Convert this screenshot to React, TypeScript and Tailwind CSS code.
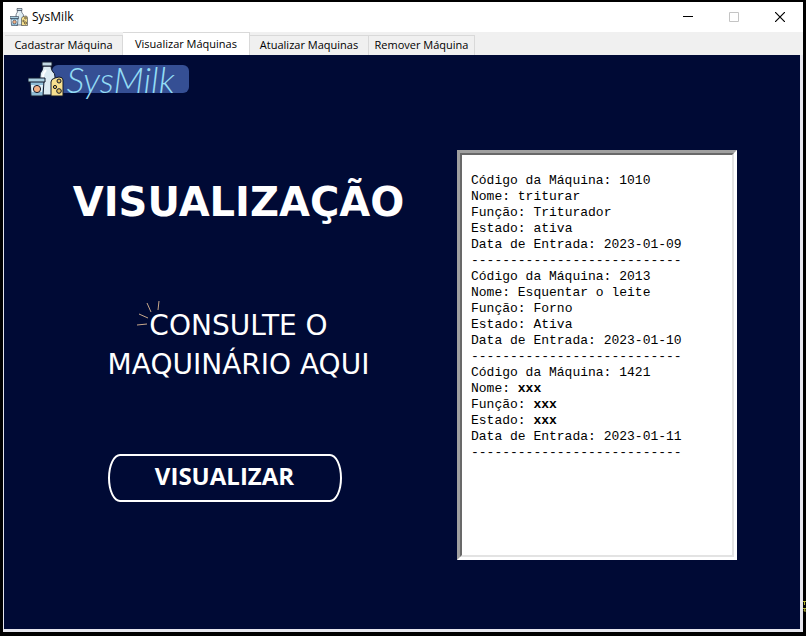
import { useState } from "react";

type Machine = {
  code: string;
  name: string;
  role: string;
  state: string;
  date: string;
  strong?: boolean;
};

const tabs = [
  { label: "Cadastrar Máquina", width: "w-[118px]" },
  { label: "Visualizar Máquinas", width: "w-[127px]" },
  { label: "Atualizar Maquinas", width: "w-[119px]" },
  { label: "Remover Máquina", width: "w-[106px]" },
];

const machines: Machine[] = [
  { code: "1010", name: "triturar", role: "Triturador", state: "ativa", date: "2023-01-09" },
  { code: "2013", name: "Esquentar o leite", role: "Forno", state: "Ativa", date: "2023-01-10" },
  { code: "1421", name: "xxx", role: "xxx", state: "xxx", date: "2023-01-11", strong: true },
];

function DairyIcon({ className }: { className: string }) {
  return (
    <svg viewBox="0 0 36 36" className={className} aria-hidden="true">
      <g stroke="#10182c" strokeWidth="1" strokeLinejoin="round">
        <path d="M15 5h8q0 4 2 6 2 1 2 5v18H12V16q0-4 1-5 2-2 2-6z" fill="#dcebf2" />
        <path d="M14 1h10v4H14z" fill="#c3d9e4" />
        <path d="M18 9q-3 3-3 7v14" stroke="#fff" strokeWidth="2" fill="none" />
        <path d="M2 20h14l-1 15H3z" fill="#8fbdd6" />
        <path d="M0 17h17v4H0z" fill="#a9cfe0" />
        <path d="M3 24h12l-1 7H4z" fill="#e4f2f8" stroke="none" />
        <circle cx="9" cy="28" r="3.6" fill="#f2b083" />
        <path d="M23 35V21q0-3 4-4l4-1q4 0 4 3v16z" fill="#f7e08f" />
        <circle cx="31" cy="20" r="2" fill="#e5c05b" />
        <circle cx="27" cy="26" r="1.6" fill="#e5c05b" />
        <circle cx="31" cy="30" r="2.3" fill="#e5c05b" />
      </g>
    </svg>
  );
}

function TitleBar() {
  const control = "flex h-full w-[46px] items-center justify-center";
  return (
    <header className="flex h-[30px] items-center bg-white pl-[7px]">
      <DairyIcon className="size-[18px]" />
      <h1 className="ml-1 flex-1 text-[12px] leading-4">SysMilk</h1>
      <button aria-label="Minimizar" className={control}>
        <svg width="10" height="10" aria-hidden="true">
          <path d="M0 4.5h10" stroke="#000" />
        </svg>
      </button>
      <button aria-label="Maximizar" disabled className={control}>
        <svg width="10" height="10" aria-hidden="true">
          <path d="M.5.5h9v9h-9z" stroke="#c4c4c4" fill="none" />
        </svg>
      </button>
      <button aria-label="Fechar" className={control}>
        <svg width="10" height="10" aria-hidden="true">
          <path d="M0 0l10 10M10 0L0 10" stroke="#000" strokeWidth="1.2" />
        </svg>
      </button>
    </header>
  );
}

function Logo() {
  return (
    <div className="flex h-[56px] items-start pl-6 pt-[6px]">
      <div className="flex h-9 w-[161px] items-center">
        <DairyIcon className="z-10 size-9 shrink-0" />
        <div className="-ml-3 flex h-7 flex-1 items-center justify-center rounded-md bg-[#354f94]">
          <span className="font-['Lato','Open_Sans',sans-serif] text-[36px] leading-7 font-light text-[#93dcf5] italic">
            SysMilk
          </span>
        </div>
      </div>
    </div>
  );
}

function Listing() {
  return (
    <section
      aria-label="Máquinas cadastradas"
      className="flex min-h-[410px] w-[280px] shrink-0 border-[3px] border-t-[#a0a0a0] border-r-white border-b-white border-l-[#a0a0a0]"
    >
      <div className="flex-1 border-2 border-t-[#696969] border-r-[#e3e3e3] border-b-[#e3e3e3] border-l-[#696969] bg-white pt-[18px] pl-[9px] font-['Liberation_Mono','Courier_New',monospace] text-[13px] leading-4 whitespace-nowrap text-black">
        {machines.map((m) => {
          const weight = m.strong ? "font-bold" : "font-normal";
          return (
            <div key={m.code}>
              <p>Código da Máquina: {m.code}</p>
              <p>Nome: <span className={weight}>{m.name}</span></p>
              <p>Função: <span className={weight}>{m.role}</span></p>
              <p>Estado: <span className={weight}>{m.state}</span></p>
              <p>Data de Entrada: {m.date}</p>
              <p>---------------------------</p>
            </div>
          );
        })}
      </div>
    </section>
  );
}

export default function App() {
  const [active, setActive] = useState(1);
  return (
    <div className="relative flex min-h-screen flex-col bg-black px-[3px] pt-[2px] pb-1 font-['Open_Sans','Noto_Sans',sans-serif] text-black">
      <TitleBar />
      <div className="flex flex-1 flex-col bg-[#f0f0f0]">
        <div role="tablist" className="flex h-[23px] items-end pl-[2px]">
          {tabs.map((tab, i) => (
            <button
              key={tab.label}
              role="tab"
              aria-selected={i === active}
              onClick={() => setActive(i)}
              className={`${tab.width} border-t border-r border-[#d9d9d9] text-[11px] whitespace-nowrap ${
                i === active ? "h-[23px] bg-white" : "h-5 bg-[#f0f0f0]"
              }`}
            >
              {tab.label}
            </button>
          ))}
        </div>
        <main className="flex flex-1 flex-col border-r-[3px] border-b-[3px] border-l border-[#e6e6ee] bg-[#000a35] text-white">
          <Logo />
          <div className="flex items-start pt-[39px] pr-[63px]">
            <div className="flex flex-1 flex-col items-center text-center">
              <h2 className="mt-7 pl-4 font-['DejaVu_Sans','Open_Sans',sans-serif] text-[40px] leading-[48px] font-bold">
                VISUALIZAÇÃO
              </h2>
              <div className="relative mt-20 pl-4 font-['DejaVu_Sans','Open_Sans',sans-serif] text-[28px] leading-[39px]">
                <svg
                  viewBox="0 0 28 28"
                  className="absolute top-[-6px] left-11 size-7"
                  stroke="#c9a98a"
                  fill="none"
                  aria-hidden="true"
                >
                  <path d="M23 1l-1 9M11 3l4 9M3 14l9 4M1 25l10-1" />
                </svg>
                <p>CONSULTE O</p>
                <p>MAQUINÁRIO AQUI</p>
              </div>
              <div className="mt-[70px] pr-3">
                <button className="h-12 w-[234px] border-2 border-white [border-radius:12px/24px] pb-1 text-[24px] leading-8 font-bold">
                  VISUALIZAR
                </button>
              </div>
            </div>
            <Listing />
          </div>
        </main>
      </div>
      <svg
        width="3"
        height="12"
        className="absolute right-0 bottom-6"
        stroke="#b5b53a"
        fill="none"
        aria-hidden="true"
      >
        <path d="M0 1.500h3M1.500 1v4M0 8.500h3M2 9l-1 2h2" />
      </svg>
    </div>
  );
}
